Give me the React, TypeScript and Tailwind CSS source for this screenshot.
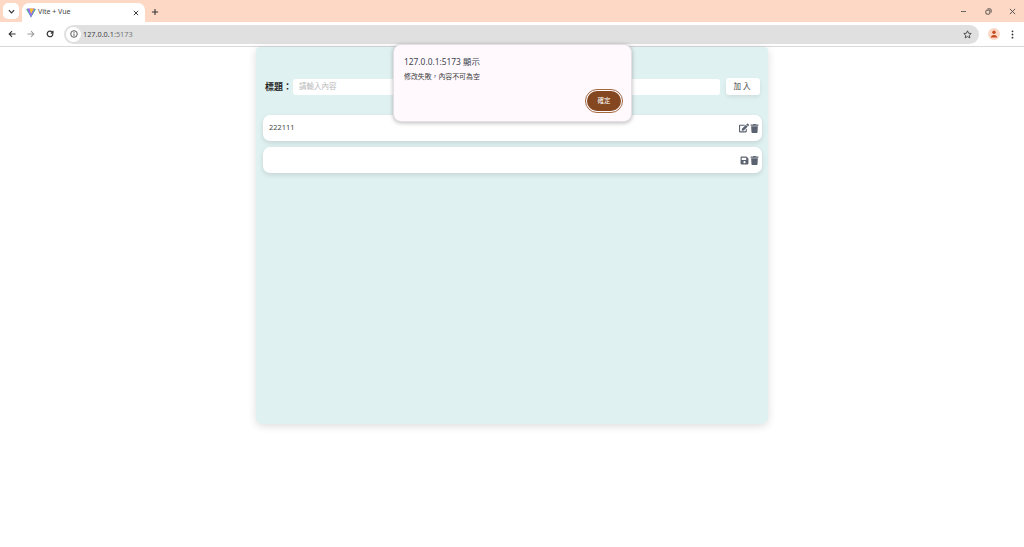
import { FaEdit, FaSave, FaTrash } from "react-icons/fa";

const font = { fontFamily: '"Noto Sans", "Noto Sans CJK TC", sans-serif' };

function ChromeBar() {
  return (
    <div className="shrink-0">
      <div className="h-[22px] bg-[#fdd8c4] flex items-end relative">
        <div className="absolute left-[3px] top-[3px] w-[16px] h-[16px] rounded-[5px] bg-white flex items-center justify-center">
          <svg width="7" height="7" viewBox="0 0 8 8" fill="none" stroke="#333" strokeWidth="1.4"><path d="M1 2.5 4 5.5 7 2.5" /></svg>
        </div>
        <div className="ml-[22px] w-[123px] h-[19px] bg-white rounded-t-[7px] flex items-center pl-[4px] pr-[6px]">
          <svg width="10" height="10" viewBox="0 0 10 10">
            <path d="M0 1 5 9.5 10 1 7.6 1 5 5.5 2.4 1Z" fill="#41b883" />
            <path d="M1 .5 5 9.5 9 .5Z" fill="#8f6df5" />
            <path d="M3.5.5 5 6 8 .5Z" fill="#fbc02d" />
          </svg>
          <span className="ml-[2px] text-[7px] text-[#444] whitespace-nowrap" style={font}>Vite + Vue</span>
          <svg className="ml-auto" width="6" height="6" viewBox="0 0 7 7" stroke="#333" strokeWidth="1.1"><path d="M1 1 6 6M6 1 1 6" /></svg>
        </div>
        <svg className="ml-[6px] mb-[6px]" width="8" height="8" viewBox="0 0 9 9" stroke="#333" strokeWidth="1.2"><path d="M4.5 1v7M1 4.5h7" /></svg>
        <div className="ml-auto flex items-center h-full">
          <svg className="mr-[18px]" width="7" height="7" viewBox="0 0 7 7" stroke="#666" strokeWidth="1"><path d="M1 3.5h5" /></svg>
          <svg className="mr-[17px]" width="7" height="7" viewBox="0 0 8 8" fill="none" stroke="#444" strokeWidth="1"><rect x="1" y="2.5" width="4.5" height="4.5" rx="1" /><path d="M2.8 1h3a1.2 1.2 0 0 1 1.2 1.2v3" /></svg>
          <svg className="mr-[8px]" width="7" height="7" viewBox="0 0 8 8" stroke="#444" strokeWidth="1"><path d="M1 1 7 7M7 1 1 7" /></svg>
        </div>
      </div>
      <div className="h-[25px] bg-white border-b border-[#d8d8d8] flex items-center pl-[8px]">
        <svg width="8" height="8" viewBox="0 0 10 10" fill="none" stroke="#333" strokeWidth="1.4"><path d="M9.5 5H1.5M5 1.5 1.5 5 5 8.5" /></svg>
        <svg className="ml-[11px]" width="8" height="8" viewBox="0 0 10 10" fill="none" stroke="#9a9a9a" strokeWidth="1.3"><path d="M.5 5h8M5 1.5 8.5 5 5 8.5" /></svg>
        <svg className="ml-[11px]" width="8" height="8" viewBox="0 0 10 10" fill="none" stroke="#333" strokeWidth="1.5"><path d="M8.5 5A3.5 3.5 0 1 1 7.4 2.4L8.7 3.6M8.7 1v2.8H6" /></svg>
        <div className="ml-[10px] w-[915px] h-[19px] rounded-full bg-[#e0e0e0] flex items-center pl-[1px]">
          <div className="w-[15px] h-[15px] ml-[1px] rounded-full bg-white flex items-center justify-center">
            <svg width="8" height="8" viewBox="0 0 9 9" fill="none" stroke="#444" strokeWidth="1"><circle cx="4.5" cy="4.5" r="3.7" /><path d="M4.5 4v2.6M4.5 2.2v1" /></svg>
          </div>
          <span className="ml-[2px] text-[7.3px] text-[#444]" style={font}>127.0.0.1<span className="text-[#777]">:5173</span></span>
          <svg className="ml-auto mr-[7px]" width="9" height="9" viewBox="0 0 10 10" fill="none" stroke="#444" strokeWidth="1"><path d="M5 .9 6.2 3.6 9.1 3.9 7 5.9 7.6 8.8 5 7.3 2.4 8.8 3 5.9.9 3.9 3.8 3.6Z" /></svg>
        </div>
        <div className="ml-[9px] w-[12px] h-[12px] rounded-full bg-[#fbd9c6] flex items-center justify-center">
          <svg width="8" height="8" viewBox="0 0 8 8" fill="#c8491d"><circle cx="4" cy="2.3" r="1.7" /><path d="M.8 7.5c0-1.8 1.4-2.6 3.2-2.6s3.2.8 3.2 2.6Z" /></svg>
        </div>
        <svg className="ml-[11px]" width="3" height="9" viewBox="0 0 3 10" fill="#333"><circle cx="1.5" cy="1.5" r="1" /><circle cx="1.5" cy="5" r="1" /><circle cx="1.5" cy="8.5" r="1" /></svg>
      </div>
    </div>
  );
}

function TodoRow({ text, editing }: { text: string; editing?: boolean }) {
  return (
    <div className="h-[26px] bg-white rounded-[7px] shadow-[0_2px_5px_rgba(0,0,0,0.12)] flex items-center pl-[6px] pr-[3px]">
      <span className="text-[7.4px] text-[#444]">{text}</span>
      <div className="ml-auto flex items-center gap-[1px] text-[#5a6270]">
        {editing ? <FaSave size={9} /> : <FaEdit size={10} />}
        <FaTrash size={9} />
      </div>
    </div>
  );
}

export default function App() {
  return (
    <div className="relative h-[547px] w-[1024px] bg-white overflow-hidden flex flex-col" style={font}>
      <ChromeBar />
      <main className="flex justify-center">
        <div className="w-[512px] h-[377px] bg-[#e0f1f1] rounded-b-[7px] rounded-t-[4px] shadow-[0_2px_8px_rgba(0,0,0,0.14)] pl-[7px] pr-[6px] pt-[31px]">
          <div className="flex items-center h-[17px] pl-[2px]">
            <label className="text-[9px] font-semibold text-[#222] mr-[1px] whitespace-nowrap">標題：</label>
            <div className="w-[427px] h-[16px] bg-white rounded-[3px] flex items-center pl-[6px] text-[7.5px] text-[#bbb]">請輸入內容</div>
            <button className="ml-[6px] w-[34px] h-[17px] bg-white rounded-[3px] text-[7.5px] text-[#444] tracking-[2px] shadow-[0_2px_4px_rgba(0,0,0,0.08)]">加入</button>
          </div>
          <div className="mt-[20px] flex flex-col gap-[6px]">
            <TodoRow text="222111" />
            <TodoRow text="" editing />
          </div>
        </div>
      </main>

      {/* alert dialog */}
      <div className="absolute left-[393px] top-[44px] w-[239px] h-[78px] bg-[#fff9fe] rounded-[8px] border border-[#e4dfe2] shadow-[0_1px_4px_rgba(0,0,0,0.28)] pl-[10px] pt-[11px]">
        <div className="text-[8.4px] text-[#3d4450] leading-[12px]">127.0.0.1:5173 顯示</div>
        <div className="mt-[4px] text-[6.9px] text-[#3a3a3a] leading-[10px]">修改失敗，內容不可為空</div>
        <div className="absolute right-[8px] top-[44px] w-[38px] h-[24px] rounded-full border border-[#a0683f] p-[1px] flex">
          <button className="w-full h-full rounded-full bg-[#84471f] text-[6.5px] text-white">確定</button>
        </div>
      </div>
    </div>
  );
}
